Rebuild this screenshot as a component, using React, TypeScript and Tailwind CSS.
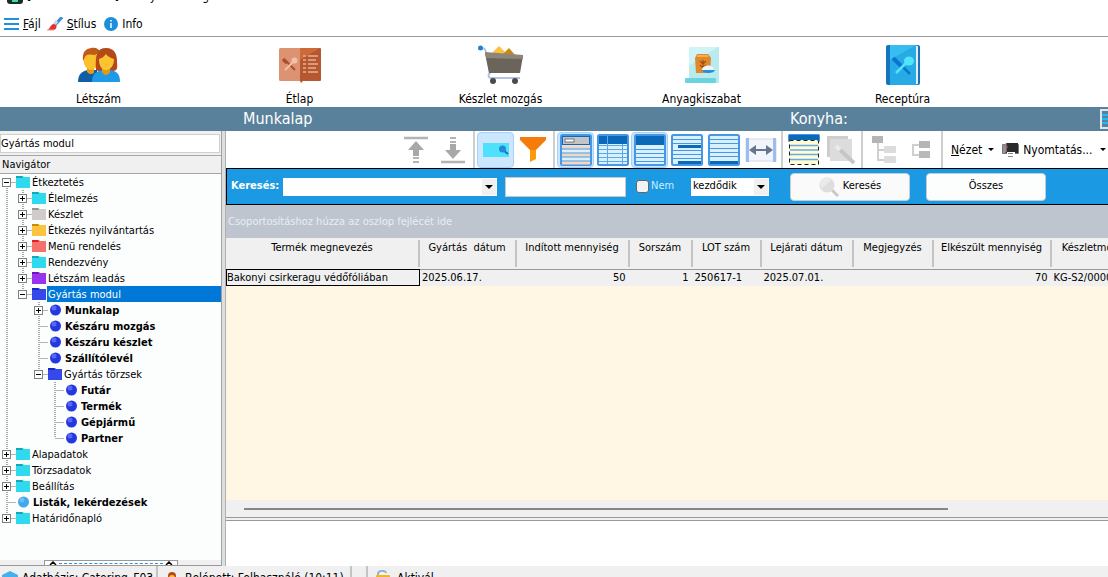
import { useState } from 'react'
import type { ReactNode } from 'react'
import clsx from 'clsx'

interface TreeNode {
  label: string
  icon: 'folder' | 'bullet'
  color: string
  tab?: string
  open?: boolean
  leaf?: boolean
  bold?: boolean
  children?: TreeNode[]
}

const cyan = { icon: 'folder' as const, color: '#2fd9ee', tab: '#12a5bc' }
const bullet = { icon: 'bullet' as const, color: '#2238e0', bold: true }

const tree: TreeNode[] = [
  {
    label: 'Étkeztetés', ...cyan, open: true, children: [
      { label: 'Élelmezés', ...cyan },
      { label: 'Készlet', icon: 'folder', color: '#cfcccb', tab: '#949494' },
      { label: 'Étkezés nyilvántartás', icon: 'folder', color: '#fcc43c', tab: '#c98a0a' },
      { label: 'Menü rendelés', icon: 'folder', color: '#f4716e', tab: '#e81c1c' },
      { label: 'Rendezvény', ...cyan },
      { label: 'Létszám leadás', icon: 'folder', color: '#9a34ec', tab: '#6e12bd' },
      {
        label: 'Gyártás modul', icon: 'folder', color: '#3448ec', tab: '#1428c8', open: true, children: [
          { label: 'Munkalap', ...bullet },
          { label: 'Készáru mozgás', ...bullet, leaf: true },
          { label: 'Készáru készlet', ...bullet, leaf: true },
          { label: 'Szállítólevél', ...bullet, leaf: true },
          {
            label: 'Gyártás törzsek', icon: 'folder', color: '#3448ec', tab: '#1428c8', open: true, children: [
              { label: 'Futár', ...bullet, leaf: true },
              { label: 'Termék', ...bullet, leaf: true },
              { label: 'Gépjármű', ...bullet, leaf: true },
              { label: 'Partner', ...bullet, leaf: true },
            ],
          },
        ],
      },
    ],
  },
  { label: 'Alapadatok', ...cyan },
  { label: 'Törzsadatok', ...cyan },
  { label: 'Beállítás', ...cyan },
  { label: 'Listák, lekérdezések', icon: 'bullet', color: '#42a8ee', bold: true, leaf: true },
  { label: 'Határidőnapló', ...cyan },
]

const columns = [
  { title: 'Termék megnevezés', width: 'w-[193px]' },
  { title: 'Gyártás  dátum', width: 'w-[97px]' },
  { title: 'Indított mennyiség', width: 'w-[113px]' },
  { title: 'Sorszám', width: 'w-[63px]' },
  { title: 'LOT szám', width: 'w-[69px]' },
  { title: 'Lejárati dátum', width: 'w-[92px]' },
  { title: 'Megjegyzés', width: 'w-[80px]' },
  { title: 'Elkészült mennyiség', width: 'w-[118px]' },
  { title: 'Készletmozgás', width: 'w-[96px]' },
]

const rows = [
  ['Bakonyi csirkeragu védőfóliában', '2025.06.17.', '50', '1', '250617-1', '2025.07.01.', '', '70', 'KG-S2/00001'],
]

const numeric = [2, 3, 7]

/* ---------- icons ---------- */

function PeopleIcon() {
  return (
    <svg width="44" height="36" viewBox="0 0 44 36">
      <path d="M1 35c0-8 4-11 10-12h9v12z" fill="#125ea4" />
      <path d="M10 20h7v6c-3 2-5 1-7-1z" fill="#e59a10" />
      <ellipse cx="14" cy="13" rx="7.500" ry="10" fill="#fcc02c" />
      <path d="M6 14C5 4 9 2 14 1c5-1 8 1 9 4l-5 3c-5-1-9-1-10 2z" fill="#c05a18" />
      <path d="M19 23C18 8 20 1 29 1s11 7 11 13c0 5 1 7-1 9-3 2-17 2-20 0z" fill="#b4491a" />
      <path d="M15 35c0-8 4-11 11-12h7c7 1 10 4 10 12z" fill="#1f9ae6" />
      <path d="M25 20h8v5c-2 4-6 4-8 0z" fill="#e39a10" />
      <path d="M22 12c4-1 5-3 7-5 2 3 5 4 8 5 0 6-3 11-8 11s-7-5-7-11z" fill="#fdc431" />
    </svg>
  )
}

function MenuCardIcon() {
  return (
    <svg width="44" height="36" viewBox="0 0 44 36">
      <rect x="1" y="1" width="22" height="33" rx="1.500" fill="#dd9272" />
      <path d="M22 1h20q1 0 1 1v31q0 1-1 1H25l-2 2-1-2z" fill="#b4582f" />
      <path d="M22 1h20L22 13z" fill="#cd6a3a" />
      <path d="M5 12l4 4" stroke="#a8512c" strokeWidth="3.500" />
      <path d="M8 14l9 9" stroke="#a8512c" strokeWidth="2" />
      <path d="M17 13L7 23" stroke="#f0c0aa" strokeWidth="2" />
      <circle cx="16.500" cy="13.500" r="3" fill="#f0c0aa" />
      <path d="M25 9h3m2 0h10M25 13h3m2 0h8M25 17h3m2 0h10M25 21h3m2 0h8M25 25h3m2 0h10" stroke="#e0987a" strokeWidth="2" />
    </svg>
  )
}

function CartIcon() {
  return (
    <svg width="46" height="40" viewBox="0 0 46 40">
      <path d="M12 10l9-9 9 9z" fill="#fbc13d" />
      <path d="M25 9l6-6 7 8z" fill="#c88a10" />
      <path d="M2 3c4 0 5 0 6 4l4 21c-2 1-2 5 1 5h29" fill="none" stroke="#b4c4de" strokeWidth="2" />
      <circle cx="2.500" cy="3" r="2.500" fill="#1c82d8" />
      <path d="M7 8l38 3-3 17H11z" fill="#6b645b" />
      <path d="M7 7l38 3v4L8 13z" fill="#8d857a" />
      <circle cx="15" cy="36" r="3" fill="#4b4b4b" />
      <circle cx="37" cy="36" r="3" fill="#4b4b4b" />
    </svg>
  )
}

function BagIcon() {
  return (
    <svg width="36" height="38" viewBox="0 0 36 38">
      <rect x="5" y="1" width="30" height="36" rx="1" fill="#b8eaee" />
      <path d="M5 1h29L5 20z" fill="#d0f3f5" />
      <rect x="1" y="32" width="31" height="5" rx="1" fill="#6bd3de" />
      <path d="M13 8h11l3 4-1 15H12l-1-15z" fill="#e0892c" />
      <path d="M13 10h11" stroke="#f7b04c" strokeWidth="2" />
      <path d="M19 14v8m-3-7l3 3 3-3m-6 4l3 3 3-3" fill="none" stroke="#a24a12" strokeWidth="1.200" />
      <path d="M18 24c0-6 12-6 12 0z" fill="#eef4f8" />
      <path d="M18 24h13c-1 4-12 4-13 0z" fill="#1e90e2" />
    </svg>
  )
}

function RecipeIcon() {
  return (
    <svg width="36" height="42" viewBox="0 0 36 42">
      <rect x="1" y="1" width="34" height="40" rx="2" fill="#1673be" />
      <rect x="5" y="1" width="27" height="40" fill="#27abe6" />
      <path d="M5 1h26L5 16z" fill="#38bdf0" />
      <path d="M32 2v38" stroke="#e6eef2" strokeWidth="2" />
      <path d="M8 14l8 8" stroke="#0a74cf" strokeWidth="4" />
      <path d="M15 20l10 10" stroke="#0a74cf" strokeWidth="2.500" />
      <path d="M22 18L11 29" stroke="#52e4fb" strokeWidth="2.500" />
      <ellipse cx="24" cy="17" rx="5" ry="4.500" fill="#52e4fb" />
    </svg>
  )
}

function BrushIcon() {
  return (
    <svg width="16" height="14" viewBox="0 0 16 14">
      <path d="M15 0L8 8" stroke="#3a8fd6" strokeWidth="3" />
      <path d="M10 4L7 8" stroke="#cfd6dc" strokeWidth="3" />
      <path d="M0 13c3 0 3-6 7-6 4 1 3 6-1 6z" fill="#e03434" />
      <path d="M0 13h7" stroke="#e8a088" />
    </svg>
  )
}

function ArrowBarIcon({ down = false }: { down?: boolean }) {
  return (
    <svg width="26" height="28" viewBox="0 0 26 28" className={down ? 'rotate-180' : ''}>
      <path d="M1 2h24" stroke="#b3b3b3" strokeWidth="2.500" />
      <path d="M13 5l8 9h-5v6h-6v-6H5z" fill="#a8a8a8" />
      <path d="M10 22h6M10 26h6" stroke="#b3b3b3" strokeWidth="2" />
    </svg>
  )
}

function FindPanelIcon() {
  return (
    <svg width="28" height="16" viewBox="0 0 28 16">
      <rect x="1" y="1" width="26" height="14" fill="#4de1fc" />
      <path d="M21 8l5 4" stroke="#1a6fc4" strokeWidth="2" />
      <circle cx="20.500" cy="7" r="3.500" fill="#2189d8" />
    </svg>
  )
}

function FunnelIcon() {
  return (
    <svg width="26" height="26" viewBox="0 0 26 26">
      <path d="M10 11h6v11l-6 3z" fill="#ff9a0a" />
      <path d="M0 0h26v3L16 13h-6L0 3z" fill="#f57c0a" />
    </svg>
  )
}

function GridIcon({ kind }: { kind: 'banded' | 'columns' | 'header' | 'groups' | 'footer' | 'select' }) {
  const lines = [11, 15, 19, 23, 27]
  if (kind === 'select') {
    return (
      <svg width="32" height="32" viewBox="0 0 32 32">
        <rect x="0" y="0" width="32" height="8" rx="1.500" fill="#4697e6" />
        <rect x="1" y="1" width="30" height="5" fill="#0a69b8" />
        <rect x="1" y="6" width="30" height="25" fill="#fefdd6" />
        <path d="M2 11.500h28M2 16h28M2 20.500h28M2 25.500h28" stroke="#6aa9e2" strokeWidth="1.500" />
        <rect x="1.500" y="6.500" width="29" height="24" fill="none" stroke="#222" strokeDasharray="4 3" />
      </svg>
    )
  }
  return (
    <svg width="32" height="32" viewBox="0 0 32 32">
      <rect x="1" y="1" width="30" height="30" rx="1.500" fill="#d9f1fd" stroke="#4697e6" strokeWidth="2" />
      {kind === 'banded' && (
        <>
          <rect x="2" y="2" width="28" height="9" fill="#0a69b8" />
          <rect x="3" y="3" width="26" height="7" fill="#c4c4c4" />
          <rect x="5" y="5" width="9" height="3" fill="#fff" stroke="#777" />
          <path d="M2 13h28M2 21h28M2 29h28" stroke="#fcd3b4" strokeWidth="3" />
          <path d="M2 15h28M2 19h28M2 23h28M2 27h28" stroke="#4697e6" />
        </>
      )}
      {kind === 'columns' && (
        <>
          <rect x="2" y="2" width="28" height="8" fill="#0a69b8" />
          {lines.map(y => <path key={y} d={`M2 ${y}.5h28`} stroke="#5ca9ea" />)}
          <path d="M10.500 2v28M25.500 10v20" stroke="#5ca9ea" />
        </>
      )}
      {kind === 'header' && (
        <>
          <rect x="2" y="2" width="28" height="9" fill="#0a69b8" />
          {[15, 19, 23, 27].map(y => <path key={y} d={`M2 ${y}.5h28`} stroke="#4697e6" />)}
        </>
      )}
      {kind === 'groups' && (
        <>
          {[5, 9, 16, 20, 24].map(y => <path key={y} d={`M2 ${y}.5h28`} stroke="#4697e6" />)}
          <path d="M7 12.500h23M7 28.500h23" stroke="#0a69b8" strokeWidth="3" />
        </>
      )}
      {kind === 'footer' && (
        <>
          {[5, 9, 14, 18, 22].map(y => <path key={y} d={`M2 ${y}.5h28`} stroke="#4697e6" />)}
          <path d="M2 28.500h28" stroke="#0a69b8" strokeWidth="3" />
        </>
      )}
    </svg>
  )
}

function WidthIcon() {
  return (
    <svg width="32" height="24" viewBox="0 0 32 24">
      <rect x="1" y="1" width="30" height="22" fill="#f2f5fb" stroke="#d4d9e4" />
      <path d="M2.500 0v24M29.500 0v24" stroke="#9dbdee" strokeWidth="3" />
      <path d="M9 12h14" stroke="#66768e" strokeWidth="2" />
      <path d="M4 12l7-5v10zM28 12l-7-5v10z" fill="#66768e" />
    </svg>
  )
}

function WandIcon() {
  return (
    <svg width="30" height="30" viewBox="0 0 30 30">
      <rect x="1" y="1" width="21" height="21" fill="#cdcdcd" />
      <rect x="4" y="4" width="22" height="22" fill="#dcdcdc" />
      <path d="M11 12l17 16" stroke="#c6c6c6" strokeWidth="4" />
      <path d="M10 11l4 4" stroke="#ececec" strokeWidth="4" />
    </svg>
  )
}

function ExpandAllIcon() {
  return (
    <svg width="24" height="28" viewBox="0 0 24 28">
      <path d="M6 7v17h8M6 14h8" fill="none" stroke="#cfcfcf" strokeWidth="2" />
      <rect x="0" y="0" width="11" height="7" fill="#b5b5b5" />
      <rect x="12" y="10" width="12" height="7" rx="1" fill="#dcdcdc" />
      <rect x="12" y="20" width="12" height="7" rx="1" fill="#dcdcdc" />
    </svg>
  )
}

function CollapseAllIcon() {
  return (
    <svg width="20" height="18" viewBox="0 0 20 18">
      <path d="M8 4H2v10h6" fill="none" stroke="#cfcfcf" strokeWidth="2" />
      <rect x="8" y="0" width="11" height="7" fill="#b5b5b5" />
      <rect x="8" y="10" width="11" height="7" fill="#b9b9b9" />
    </svg>
  )
}

function PrinterIcon() {
  return (
    <svg width="17" height="16" viewBox="0 0 17 16">
      <rect x="0" y="2" width="17" height="10" rx="1" fill="#777" />
      <rect x="4" y="1" width="12" height="10" fill="#2a2a2a" />
      <path d="M4 1v9M2 3v8" stroke="#aaa" />
      <circle cx="5" cy="5" r="1" fill="#d33" />
      <rect x="5" y="10" width="8" height="5" fill="#fff" />
      <path d="M6 11.500h5M6 14.500h5" stroke="#888" />
    </svg>
  )
}

function MagnifierIcon() {
  return (
    <svg width="20" height="20" viewBox="0 0 20 20">
      <path d="M12 12l7 7" stroke="#c9c9c9" strokeWidth="3" />
      <circle cx="8" cy="8" r="7.500" fill="#dedede" />
      <path d="M3 11A6 6 0 0 1 12 3z" fill="#ebebeb" />
    </svg>
  )
}

function Caret({ small = false }: { small?: boolean }) {
  return (
    <svg width={small ? 6 : 8} height={small ? 3 : 4} viewBox="0 0 8 4" preserveAspectRatio="none" className="shrink-0">
      <path d="M0 0h8L4 4z" fill="#000" />
    </svg>
  )
}

/* ---------- tree ---------- */

function Guide({ line }: { line: boolean }) {
  return (
    <svg width="16" height="16" viewBox="0 0 16 16" className="shrink-0">
      {line && <path d="M7 0v16" stroke="#a8a8a8" strokeWidth="2" strokeDasharray="1 1" />}
    </svg>
  )
}

function Branch({ node, first, last }: { node: TreeNode; first: boolean; last: boolean }) {
  return (
    <svg width="16" height="16" viewBox="0 0 16 16" className="shrink-0">
      {!first && <path d="M7 0v8" stroke="#a8a8a8" strokeWidth="2" strokeDasharray="1 1" />}
      {!last && <path d="M7 8v8" stroke="#a8a8a8" strokeWidth="2" strokeDasharray="1 1" />}
      <path d="M7 8.500h9" stroke="#b4b4b4" />
      {!node.leaf && (
        <>
          <rect x="2.500" y="4.500" width="8" height="8" fill="#fff" stroke="#808080" />
          <path d={node.open ? 'M4 8.500h5' : 'M4 8.500h5M6.500 6v5'} stroke="#000" />
        </>
      )}
    </svg>
  )
}

function NodeIcon({ node }: { node: TreeNode }) {
  if (node.icon === 'bullet') {
    return (
      <svg width="15" height="16" viewBox="0 0 15 16" className="shrink-0">
        <circle cx="7.500" cy="8" r="5.500" fill={node.color} />
        <circle cx="6" cy="6" r="2.500" fill="#fff" opacity="0.250" />
      </svg>
    )
  }
  return (
    <svg width="15" height="16" viewBox="0 0 15 16" className="shrink-0">
      <path d="M0 2h7l1 1h6v11H0z" fill={node.color} />
      <path d="M0 2h6l1 2H0z" fill={node.tab} />
    </svg>
  )
}

interface TreeLevelProps {
  nodes: TreeNode[]
  guides: boolean[]
  selected: string
  onSelect: (label: string) => void
}

function TreeLevel({ nodes, guides, selected, onSelect }: TreeLevelProps) {
  return (
    <ul>
      {nodes.map((node, i) => {
        const last = i === nodes.length - 1
        return (
          <li key={node.label}>
            <button type="button" onClick={() => onSelect(node.label)} className="flex h-4 w-full items-center text-left">
              {guides.map((line, g) => <Guide key={g} line={line} />)}
              <Branch node={node} first={i === 0 && guides.length === 0} last={last} />
              <NodeIcon node={node} />
              <span
                className={clsx(
                  'h-4 flex-1 whitespace-nowrap border border-transparent leading-4',
                  node.bold && 'pl-px font-bold',
                  selected === node.label && 'border-dotted border-[#ff8728] bg-[#0078d7] text-white'
                )}
              >
                {node.label}
              </span>
            </button>
            {node.open && node.children && (
              <TreeLevel nodes={node.children} guides={[...guides, !last]} selected={selected} onSelect={onSelect} />
            )}
          </li>
        )
      })}
    </ul>
  )
}

/* ---------- layout parts ---------- */

function Shortcut({ label, children }: { label: string; children: ReactNode }) {
  return (
    <button type="button" className="flex w-[201px] shrink-0 flex-col items-center text-[12px]">
      <span className="flex h-14 items-center justify-center">{children}</span>
      <span className="h-3.5 leading-3">{label}</span>
    </button>
  )
}

function ToolButton({ label, active, children }: { label: string; active?: boolean; children: ReactNode }) {
  return (
    <button
      type="button"
      aria-label={label}
      aria-pressed={active}
      className={clsx(
        'flex h-9 w-[37px] shrink-0 items-center justify-center rounded',
        active && 'border border-[#a6d1fa] bg-[#cce6fe]'
      )}
    >
      {children}
    </button>
  )
}

function Separator() {
  return <span className="mx-0.5 h-full w-0.5 shrink-0 bg-[#cfcfcf]" />
}

function DropDown({ label, className, options }: { label: string; className: string; options: string[] }) {
  return (
    <div className={clsx('relative shrink-0', className)}>
      <select aria-label={label} className="h-[18px] w-full appearance-none bg-white pl-0.5 text-black outline-none">
        {options.map(o => <option key={o}>{o}</option>)}
      </select>
      <span className="pointer-events-none absolute inset-y-px right-px flex w-[14px] items-center justify-center bg-[#f0f0f0]">
        <Caret />
      </span>
    </div>
  )
}

function Toolbar() {
  return (
    <div className="flex h-[37px] shrink-0 items-center bg-white pl-[171px]">
      <ToolButton label="Első"><ArrowBarIcon /></ToolButton>
      <ToolButton label="Utolsó"><ArrowBarIcon down /></ToolButton>
      <Separator />
      <ToolButton label="Keresőpanel" active><FindPanelIcon /></ToolButton>
      <ToolButton label="Szűrő"><FunnelIcon /></ToolButton>
      <Separator />
      <ToolButton label="Csoportosítás" active><GridIcon kind="banded" /></ToolButton>
      <ToolButton label="Oszlopok"><GridIcon kind="columns" /></ToolButton>
      <ToolButton label="Fejléc" active><GridIcon kind="header" /></ToolButton>
      <ToolButton label="Csoport lábléc"><GridIcon kind="groups" /></ToolButton>
      <ToolButton label="Lábléc"><GridIcon kind="footer" /></ToolButton>
      <ToolButton label="Oszlopszélesség"><WidthIcon /></ToolButton>
      <Separator />
      <ToolButton label="Kijelölés"><GridIcon kind="select" /></ToolButton>
      <ToolButton label="Varázsló"><WandIcon /></ToolButton>
      <Separator />
      <ToolButton label="Kibontás"><ExpandAllIcon /></ToolButton>
      <ToolButton label="Összecsukás"><CollapseAllIcon /></ToolButton>
      <Separator />
      <button type="button" className="ml-1.5 flex shrink-0 items-center gap-1.5 text-[12px]">
        <span><u>N</u>ézet</span>
        <Caret small />
      </button>
      <button type="button" className="ml-2 flex shrink-0 items-center gap-1 whitespace-nowrap text-[12px]">
        <PrinterIcon />
        <span className="mr-1">Nyomtatás...</span>
        <Caret small />
      </button>
    </div>
  )
}

function SearchBar() {
  return (
    <form
      onSubmit={e => e.preventDefault()}
      className="flex h-[37px] shrink-0 items-center border-y border-l border-black bg-[#1b99e2] pl-1"
    >
      <span className="w-[52px] shrink-0 font-bold text-white">Keresés:</span>
      <DropDown label="Keresés" className="w-[214px]" options={['']} />
      <input aria-label="Keresett szöveg" className="ml-2 h-5 w-[121px] shrink-0 border border-[#c8c8c8] bg-white px-1 outline-none" />
      <label className="ml-2.5 flex w-[55px] shrink-0 items-center gap-0.5 text-[#cdeeff]">
        <input type="checkbox" className="h-[13px] w-[13px] appearance-none rounded-[3px] border border-[#666] bg-[#f3f3f3] checked:bg-[#0078d7]" />
        Nem
      </label>
      <DropDown label="Feltétel" className="w-[78px]" options={['kezdődik', 'tartalmazza', 'végződik']} />
      <button type="submit" className="ml-[21px] flex h-7 w-[120px] shrink-0 items-center justify-center gap-1 rounded border border-[#c6cdd2] bg-[#fafafa]">
        <MagnifierIcon />
        Keresés
      </button>
      <button type="button" className="ml-4 h-7 w-[120px] shrink-0 rounded border border-[#c6cdd2] bg-[#fcfefe]">
        Összes
      </button>
    </form>
  )
}

function DataGrid() {
  return (
    <table className="w-full min-w-[921px] table-fixed border-collapse bg-[#f0f0f0]">
      <thead>
        <tr className="h-[31px] border-b border-[#999]">
          {columns.map(c => (
            <th key={c.title} scope="col" className={clsx('whitespace-pre p-0 align-top font-normal', c.width)}>
              <div className="mt-0.5 h-[27px] border-r-2 border-[#c4c4c4] leading-4">{c.title}</div>
            </th>
          ))}
        </tr>
      </thead>
      <tbody>
        {rows.map(row => (
          <tr key={row[4]} className="h-4">
            {row.map((cell, i) => (
              <td
                key={i}
                className={clsx(
                  'overflow-hidden whitespace-nowrap p-0 leading-[15px]',
                  i === 0 && 'border border-black',
                  numeric.includes(i) ? 'pr-1 text-right' : i > 0 && 'pl-0.5'
                )}
              >
                {cell}
              </td>
            ))}
          </tr>
        ))}
      </tbody>
    </table>
  )
}

export default function App() {
  const [selected, setSelected] = useState('Gyártás modul')

  return (
    <div className="flex h-screen flex-col overflow-hidden bg-[#f0f0f0] font-['DejaVu_Sans_Condensed','DejaVu_Sans',sans-serif] text-[11px] text-black">
      <header className="flex h-3 shrink-0 items-end gap-1 overflow-hidden bg-white pl-[7px]">
        <svg width="16" height="16" viewBox="0 0 16 16" className="mb-2 shrink-0">
          <rect width="16" height="16" rx="3" fill="#1c2b2b" />
          <path d="M11 5H6v8h5" fill="none" stroke="#3ddca0" strokeWidth="2" />
        </svg>
        <span className="mb-2 whitespace-nowrap text-[12px] leading-4">[Demo Saturnus] - Konyha Manager</span>
      </header>

      <nav className="flex h-[25px] shrink-0 items-center border-b border-[#999] bg-white pl-1 text-[12px]">
        <button type="button" className="flex items-center gap-1">
          <svg width="15" height="12" viewBox="0 0 15 12">
            <path d="M0 1h15M0 6h15M0 11h15" stroke="#1c93dc" strokeWidth="2" />
          </svg>
          <span><u>F</u>ájl</span>
        </button>
        <button type="button" className="ml-1.5 flex items-center gap-1">
          <BrushIcon />
          <span><u>S</u>tílus</span>
        </button>
        <button type="button" className="ml-2 flex items-center gap-1">
          <svg width="14" height="14" viewBox="0 0 14 14">
            <circle cx="7" cy="7" r="7" fill="#1b8fdd" />
            <path d="M7 6v5M7 3v1.500" stroke="#fff" strokeWidth="1.500" />
          </svg>
          <span>Info</span>
        </button>
      </nav>

      <div className="-ml-0.5 flex h-[70px] shrink-0 bg-white">
        <Shortcut label="Létszám"><PeopleIcon /></Shortcut>
        <Shortcut label="Étlap"><MenuCardIcon /></Shortcut>
        <Shortcut label="Készlet mozgás"><CartIcon /></Shortcut>
        <Shortcut label="Anyagkiszabat"><BagIcon /></Shortcut>
        <Shortcut label="Receptúra"><RecipeIcon /></Shortcut>
      </div>

      <div className="flex h-6 shrink-0 items-center overflow-hidden bg-[#5a819b] pl-[243px] text-[16px] text-white">
        <h1 className="w-[547px] shrink-0">Munkalap</h1>
        <span>Konyha:</span>
        <svg width="8" height="20" viewBox="0 0 8 20" className="ml-auto shrink-0">
          <path d="M8 1H1v18h7" fill="#5a819b" stroke="#dfe6ea" strokeWidth="2" />
          <path d="M2 6h6M2 10h6M2 14h6" stroke="#22b8f4" strokeWidth="2" />
        </svg>
      </div>

      <div className="flex min-h-0 flex-1">
        <aside className="flex w-[222px] shrink-0 flex-col border-r border-[#a0a0a0]">
          <input
            aria-label="Modul keresése"
            defaultValue="Gyártás modul"
            className="mt-[3px] mr-px h-[19px] border border-[#d0d0d0] bg-white outline-none"
          />
          <h2 className="mt-0.5 h-[19px] border-y border-[#a8a8a8] pl-0.5 leading-[18px]">Navigátor</h2>
          <div className="min-h-0 flex-1 overflow-hidden bg-[#fcfefe]">
            <TreeLevel nodes={tree} guides={[]} selected={selected} onSelect={setSelected} />
          </div>
          <div className="h-1.5 shrink-0 border-b border-[#999] pl-11">
            <button type="button" aria-label="Panel" className="flex h-[5px] w-[134px] items-center justify-between border border-b-0 border-[#999] bg-white px-1">
              <svg width="8" height="4" viewBox="0 0 8 4"><path d="M1 4l3-3 3 3" fill="none" stroke="#000" strokeWidth="1.500" /></svg>
              <span className="mx-0.5 flex-1 border-t border-dashed border-[#2a93e8]" />
              <svg width="8" height="4" viewBox="0 0 8 4"><path d="M1 4l3-3 3 3" fill="none" stroke="#000" strokeWidth="1.500" /></svg>
            </button>
          </div>
        </aside>
        <div className="w-1 shrink-0 cursor-col-resize border-r border-[#b0b0b0] bg-[#dedede]" />

        <main className="flex min-w-0 flex-1 flex-col overflow-hidden">
          <Toolbar />
          <SearchBar />
          <div className="flex h-[33px] shrink-0 items-center bg-[#bec5cf] pt-0.5 pl-0.5 text-[#e9edf2]">
            Csoportosításhoz húzza az oszlop fejlécét ide
          </div>
          <div className="min-h-0 flex-1 overflow-hidden bg-[#fff6e4]">
            <DataGrid />
          </div>
          <div className="flex h-[18px] shrink-0 items-center border-b border-[#999] pr-[160px] pl-[18px]">
            <span className="h-0.5 flex-1 bg-[#858585]" />
          </div>
          <div className="mt-0.5 h-[46px] shrink-0 border-t border-[#999] bg-white" />
        </main>
      </div>

      <footer className="flex h-[11px] shrink-0 overflow-hidden text-[12px]">
        <div className="flex w-[158px] shrink-0 gap-1 border-r-2 border-[#c4c4c4] pl-0.5 whitespace-nowrap">
          <svg width="16" height="16" viewBox="0 0 16 16" className="mt-1 shrink-0">
            <path d="M8 1l8 4v7l-8 4-8-4V5z" fill="#45b1ec" />
          </svg>
          <span className="mt-1 leading-4">Adatbázis: Catering_F03</span>
        </div>
        <div className="flex w-[194px] shrink-0 gap-1.5 border-r-2 border-[#c4c4c4] pl-[7px] whitespace-nowrap">
          <svg width="14" height="16" viewBox="0 0 14 16" className="mt-1 shrink-0">
            <circle cx="7" cy="6" r="4" fill="#b4491a" />
            <circle cx="7" cy="8" r="3" fill="#fdc431" />
          </svg>
          <span className="mt-1 leading-4">Belépett: Felhasználó (10:11)</span>
        </div>
        <div className="w-4 shrink-0 border-r-2 border-[#c4c4c4]" />
        <div className="flex gap-1.5 pl-[7px]">
          <svg width="16" height="16" viewBox="0 0 16 16" className="mt-1 shrink-0">
            <path d="M3 7V4c0-4 8-4 8-1" fill="none" stroke="#8fb4d8" strokeWidth="2" />
            <rect x="1" y="5" width="14" height="10" rx="1" fill="#f2b71c" />
          </svg>
          <span className="mt-1 leading-4">Aktivál</span>
        </div>
      </footer>
    </div>
  )
}
